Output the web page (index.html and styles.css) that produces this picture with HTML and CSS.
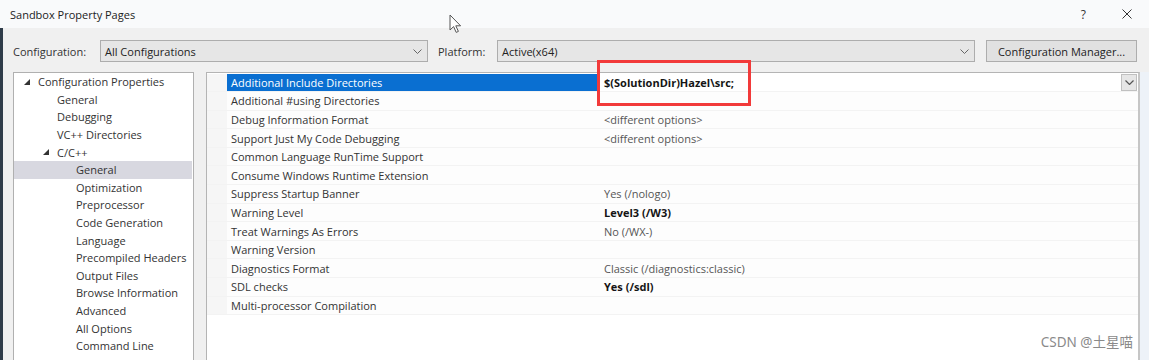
FILE: index.html
```html
<!DOCTYPE html>
<html lang="en">
<head>
<meta charset="utf-8">
<title>Sandbox Property Pages</title>
<link rel="stylesheet" href="styles.css">
</head>
<body>
<div class="window">
  <header class="titlebar">
    <span class="title">Sandbox Property Pages</span>
    <div class="caption-buttons">
      <span class="help">?</span>
      <span class="close"><svg width="10" height="10" viewBox="0 0 10 10"><path d="M0.5 0.5 L9.5 9.5 M9.5 0.5 L0.5 9.5" stroke="#333" stroke-width="1" fill="none"/></svg></span>
    </div>
  </header>
  <div class="frame">
    <div class="toolbar">
      <span class="lbl lbl-config">Configuration:</span>
      <div class="combo combo-config">
        <span class="combo-text">All Configurations</span>
        <svg class="chev" width="9" height="5" viewBox="0 0 9 5"><path d="M0.5 0.5 L4.5 4.5 L8.5 0.5" stroke="#666" stroke-width="1" fill="none"/></svg>
      </div>
      <span class="lbl lbl-platform">Platform:</span>
      <div class="combo combo-platform">
        <span class="combo-text">Active(x64)</span>
        <svg class="chev" width="9" height="5" viewBox="0 0 9 5"><path d="M0.5 0.5 L4.5 4.5 L8.5 0.5" stroke="#666" stroke-width="1" fill="none"/></svg>
      </div>
      <button class="btn">Configuration Manager...</button>
    </div>
    <div class="main">
      <div class="tree">
        <div class="node l0"><span class="tog"><svg width="6" height="6" viewBox="0 0 6 6"><path d="M6 0 L6 6 L0 6 Z" fill="#333"/></svg></span><span>Configuration Properties</span></div>
        <div class="node l1"><span class="tog"></span><span>General</span></div>
        <div class="node l1"><span class="tog"></span><span>Debugging</span></div>
        <div class="node l1"><span class="tog"></span><span>VC++ Directories</span></div>
        <div class="node l1"><span class="tog"><svg width="6" height="6" viewBox="0 0 6 6"><path d="M6 0 L6 6 L0 6 Z" fill="#333"/></svg></span><span>C/C++</span></div>
        <div class="node l2 sel"><span class="tog"></span><span>General</span></div>
        <div class="node l2"><span class="tog"></span><span>Optimization</span></div>
        <div class="node l2"><span class="tog"></span><span>Preprocessor</span></div>
        <div class="node l2"><span class="tog"></span><span>Code Generation</span></div>
        <div class="node l2"><span class="tog"></span><span>Language</span></div>
        <div class="node l2"><span class="tog"></span><span>Precompiled Headers</span></div>
        <div class="node l2"><span class="tog"></span><span>Output Files</span></div>
        <div class="node l2"><span class="tog"></span><span>Browse Information</span></div>
        <div class="node l2"><span class="tog"></span><span>Advanced</span></div>
        <div class="node l2"><span class="tog"></span><span>All Options</span></div>
        <div class="node l2"><span class="tog"></span><span>Command Line</span></div>
        <div class="node l1"><span class="tog"><svg width="6" height="7" viewBox="0 0 6 7"><path d="M0.5 0.5 L5 3.5 L0.5 6.5 Z" stroke="#555" stroke-width="1" fill="none"/></svg></span><span>Linker</span></div>
      </div>
      <div class="grid">
        <div class="row active"><span class="gutter"></span><span class="name">Additional Include Directories</span><span class="value bold">$(SolutionDir)Hazel\src;<span class="dd"><svg width="9" height="5" viewBox="0 0 9 5"><path d="M0.5 0.5 L4.5 4.5 L8.5 0.5" stroke="#555" stroke-width="1.2" fill="none"/></svg></span></span></div>
        <div class="row"><span class="gutter"></span><span class="name">Additional #using Directories</span><span class="value"></span></div>
        <div class="row"><span class="gutter"></span><span class="name">Debug Information Format</span><span class="value">&lt;different options&gt;</span></div>
        <div class="row"><span class="gutter"></span><span class="name">Support Just My Code Debugging</span><span class="value">&lt;different options&gt;</span></div>
        <div class="row"><span class="gutter"></span><span class="name">Common Language RunTime Support</span><span class="value"></span></div>
        <div class="row"><span class="gutter"></span><span class="name">Consume Windows Runtime Extension</span><span class="value"></span></div>
        <div class="row"><span class="gutter"></span><span class="name">Suppress Startup Banner</span><span class="value">Yes (/nologo)</span></div>
        <div class="row"><span class="gutter"></span><span class="name">Warning Level</span><span class="value bold">Level3 (/W3)</span></div>
        <div class="row"><span class="gutter"></span><span class="name">Treat Warnings As Errors</span><span class="value">No (/WX-)</span></div>
        <div class="row"><span class="gutter"></span><span class="name">Warning Version</span><span class="value"></span></div>
        <div class="row"><span class="gutter"></span><span class="name">Diagnostics Format</span><span class="value">Classic (/diagnostics:classic)</span></div>
        <div class="row"><span class="gutter"></span><span class="name">SDL checks</span><span class="value bold">Yes (/sdl)</span></div>
        <div class="row"><span class="gutter"></span><span class="name">Multi-processor Compilation</span><span class="value"></span></div>
      </div>
      <div class="edge"></div>
    </div>
  </div>
  <div class="highlight-box"></div>
  <svg class="cursor" width="14" height="20" viewBox="0 0 14 20"><path d="M1 1 L1 16 L4.6 12.6 L7.2 18.4 L9.4 17.4 L6.8 11.8 L11.6 11.8 Z" fill="#fff" stroke="#555" stroke-width="1" stroke-linejoin="round"/></svg>
  <div class="watermark">CSDN @土星喵</div>
</div>
</body>
</html>
```

FILE: styles.css
```css
* { box-sizing: border-box; }

body {
  margin: 0;
  width: 1149px;
  height: 360px;
  overflow: hidden;
  background: #f0f0f0;
  font-family: "Open Sans", "Noto Sans", sans-serif;
  font-size: 11px;
  color: #222;
}

.window {
  position: relative;
  width: 1149px;
  height: 360px;
  display: flex;
  flex-direction: column;
}

.titlebar {
  height: 28px;
  background: #f9fafb;
  display: flex;
  align-items: center;
  justify-content: space-between;
  padding: 0 17px 0 10px;
  flex: none;
}

.title {
  font-size: 11px;
  color: #222;
}

.caption-buttons {
  display: flex;
  align-items: center;
  gap: 36px;
}

.help {
  font-size: 12px;
  color: #333;
}

.close {
  display: flex;
}

.frame {
  flex: 1;
  display: flex;
  flex-direction: column;
  border-left: 3px solid #2f3c49;
  min-height: 0;
}

.toolbar {
  display: flex;
  align-items: center;
  padding: 12px 0 0 10px;
  height: 34px;
  flex: none;
}

.lbl {
  color: #333;
  flex: none;
}

.lbl-config { width: 87px; }
.lbl-platform { width: 59px; margin-left: 10px; }

.combo {
  height: 22px;
  background: #e6e6e6;
  border: 1px solid #adadad;
  display: flex;
  align-items: center;
  justify-content: space-between;
  padding: 0 5px 0 4px;
  flex: none;
}

.combo-config { width: 328px; }
.combo-platform { width: 478px; }

.combo-text { color: #222; }

.btn {
  margin-left: 11px;
  width: 151px;
  height: 22px;
  background: #e1e1e1;
  border: 1px solid #adadad;
  font-family: inherit;
  font-size: 11px;
  color: #222;
  padding: 0;
  flex: none;
}

.main {
  flex: 1;
  display: flex;
  padding: 10px 0 0 10px;
  min-height: 0;
}

.tree {
  width: 181px;
  flex: none;
  background: #fff;
  border: 1px solid #b0b0b0;
  border-bottom: none;
  padding: 0 1px 0 0;
  overflow: hidden;
}

.node {
  height: 17.6px;
  display: flex;
  align-items: center;
  color: #333;
  white-space: nowrap;
}

.l0 { padding-left: 8px; }
.l1 { padding-left: 27px; }
.l2 { padding-left: 46px; }

.tog {
  width: 16px;
  flex: none;
  display: flex;
  align-items: center;
  padding-left: 2px;
}

.sel { background: #d8d8e0; }

.grid {
  margin-left: 12px;
  width: 934px;
  flex: none;
  background: #fff;
  border: 1px solid #b4b4b4;
  border-right: 2px solid #c6c6c6;
  border-bottom: none;
  padding-top: 0.5px;
}

.row {
  height: 18.6px;
  display: flex;
  align-items: stretch;
  border-bottom: 1px solid #f3f3f3;
  background: #fdfdfd;
}

.gutter {
  width: 20px;
  flex: none;
  background: #f6f6f6;
}

.name {
  width: 372px;
  flex: none;
  padding-left: 4px;
  display: flex;
  align-items: center;
  color: #333;
  white-space: nowrap;
}

.value {
  flex: 1;
  display: flex;
  align-items: center;
  padding-left: 5px;
  color: #555;
  white-space: nowrap;
  position: relative;
}

.bold {
  font-weight: 700;
  color: #151515;
}

.active .name {
  background: #0a6fd1;
  color: #fff;
}

.active .value { background: #fff; }

.dd {
  margin-left: auto;
  margin-right: 1px;
  width: 16px;
  height: 17px;
  background: #e6e6e6;
  border: 1px solid #c0c0c0;
  display: flex;
  align-items: center;
  justify-content: center;
}

.edge {
  flex: 1;
  background: #edf2f8;
}

.highlight-box {
  position: absolute;
  left: 597px;
  top: 60px;
  width: 154px;
  height: 46px;
  border: 3px solid #f23a3a;
}

.cursor {
  position: absolute;
  left: 449px;
  top: 14px;
}

.watermark {
  position: absolute;
  right: 16px;
  bottom: 9px;
  font-family: "Noto Sans", "Noto Sans CJK SC", sans-serif;
  font-size: 13.5px;
  color: #8a8a8a;
}
```
